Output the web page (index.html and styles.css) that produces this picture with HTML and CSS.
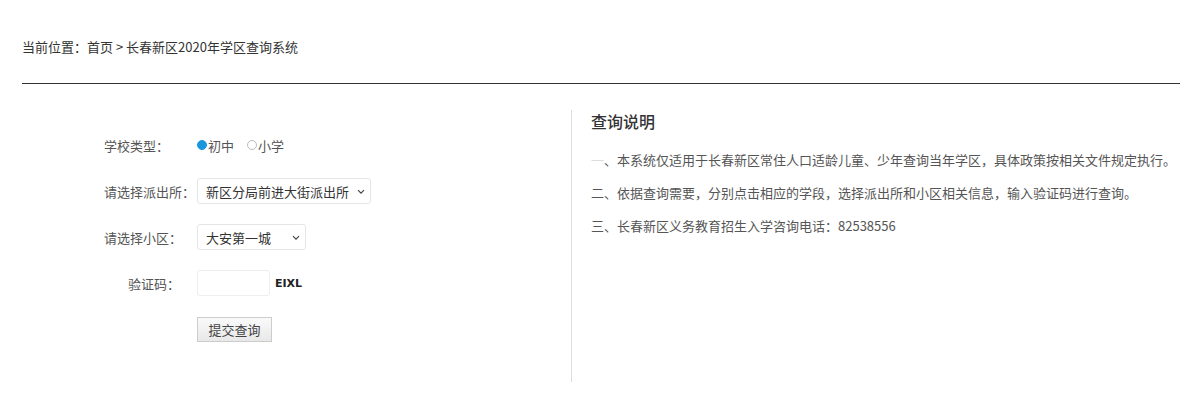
FILE: index.html
```html
<!DOCTYPE html>
<html lang="zh-CN">
<head>
<meta charset="utf-8">
<title>长春新区2020年学区查询系统</title>
<link rel="stylesheet" href="styles.css">
</head>
<body>
<div class="page">
  <div class="crumb">当前位置：首页 &gt; 长春新区2020年学区查询系统</div>
  <div class="content">
    <div class="left">
      <div class="row">
        <div class="label">学校类型：</div>
        <div class="field radios">
          <label class="radio"><span class="dot on"></span>初中</label>
          <label class="radio"><span class="dot"></span>小学</label>
        </div>
      </div>
      <div class="row">
        <div class="label">请选择派出所：</div>
        <div class="field">
          <div class="select w1">
            <span>新区分局前进大街派出所</span>
            <svg class="chev" width="8" height="6" viewBox="0 0 8 6"><path d="M1 1.2 L4 4.2 L7 1.2" fill="none" stroke="#444" stroke-width="1.2"/></svg>
          </div>
        </div>
      </div>
      <div class="row">
        <div class="label">请选择小区：</div>
        <div class="field">
          <div class="select w2">
            <span>大安第一城</span>
            <svg class="chev" width="8" height="6" viewBox="0 0 8 6"><path d="M1 1.2 L4 4.2 L7 1.2" fill="none" stroke="#444" stroke-width="1.2"/></svg>
          </div>
        </div>
      </div>
      <div class="row">
        <div class="label indent">验证码：</div>
        <div class="field">
          <div class="input"></div>
          <span class="code">EIXL</span>
        </div>
      </div>
      <div class="row">
        <div class="label"></div>
        <div class="field">
          <div class="btn">提交查询</div>
        </div>
      </div>
    </div>
    <div class="right">
      <h2 class="title">查询说明</h2>
      <p class="note"><span class="faint">一</span>、本系统仅适用于长春新区常住人口适龄儿童、少年查询当年学区，具体政策按相关文件规定执行。</p>
      <p class="note">二、依据查询需要，分别点击相应的学段，选择派出所和小区相关信息，输入验证码进行查询。</p>
      <p class="note">三、长春新区义务教育招生入学咨询电话：82538556</p>
    </div>
  </div>
</div>
</body>
</html>
```

FILE: styles.css
```css
html, body {
  margin: 0;
  padding: 0;
  background: #fff;
}
body {
  font-family: "Noto Sans CJK SC", "Microsoft YaHei", sans-serif;
  font-size: 13px;
  color: #333;
}
.page {
  padding: 0 20px 0 22px;
}
.crumb {
  height: 34px;
  padding-top: 30px;
  line-height: 34px;
  border-bottom: 1px solid #333;
  padding-bottom: 19px;
  color: #333;
}
.content {
  display: flex;
  padding-top: 26px;
}
.left {
  width: 550px;
  border-right: 1px solid #ddd;
  height: 272px;
  padding-top: 12px;
  box-sizing: border-box;
}
.row {
  display: flex;
  align-items: center;
  height: 46px;
}
.label {
  width: 175px;
  padding-left: 82px;
  box-sizing: border-box;
  color: #555;
}
.label.indent {
  padding-left: 106px;
}
.field {
  display: flex;
  align-items: center;
}
.radios {
  gap: 13px;
  color: #555;
}
.radio {
  display: flex;
  align-items: center;
}
.dot {
  width: 10px;
  height: 10px;
  border-radius: 50%;
  border: 1px solid #bbb;
  box-sizing: border-box;
  margin-right: 1px;
}
.dot.on {
  background: #1a96dc;
  border-color: #1a96dc;
}
.select {
  position: relative;
  height: 26px;
  border: 1px solid #e6e6e6;
  border-radius: 3px;
  box-sizing: border-box;
  padding-left: 8px;
  display: flex;
  align-items: center;
  color: #333;
  font-size: 13px;
}
.select.w1 { width: 174px; }
.select.w2 { width: 109px; }
.chev {
  position: absolute;
  right: 5px;
  top: 10px;
  background: #fff;
}
.input {
  width: 73px;
  height: 26px;
  border: 1px solid #eee;
  border-radius: 3px;
  box-sizing: border-box;
}
.code {
  margin-left: 5px;
  font-family: "DejaVu Sans", sans-serif;
  font-weight: bold;
  font-size: 11px;
  color: #222;
}
.btn {
  width: 75px;
  height: 25px;
  box-sizing: border-box;
  border: 1px solid #ccc;
  background: linear-gradient(#fafafa, #e8e8e8);
  display: flex;
  align-items: center;
  justify-content: center;
  color: #444;
}
.right {
  padding-left: 19px;
  flex: 1;
}
.title {
  margin: 0;
  font-size: 16px;
  font-weight: 500;
  color: #333;
  line-height: 20px;
  padding-top: 1px;
}
.note {
  margin: 0;
  color: #555;
  line-height: 20px;
}
.title + .note { margin-top: 19px; }
.note + .note { margin-top: 13px; }
.faint { color: #ddd; }
```
